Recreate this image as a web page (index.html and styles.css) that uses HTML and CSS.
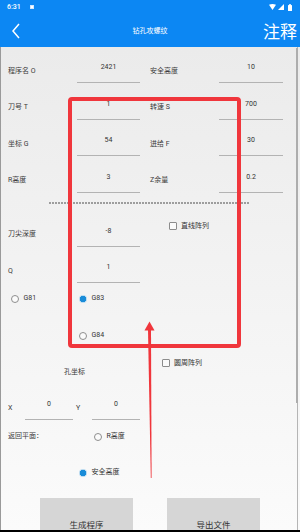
FILE: index.html
```html
<!DOCTYPE html>
<html lang="zh">
<head>
<meta charset="utf-8">
<title>钻孔攻螺纹</title>
<link rel="stylesheet" href="styles.css">
</head>
<body>
<header class="appbar">
  <div class="status">
    <span class="time">6:31</span>
    <span class="notif"></span>
    <span class="sys">
      <svg class="wifi" width="7" height="6" viewBox="0 0 7 6"><path d="M0 0.8 Q3.5 -0.8 7 0.8 L3.5 6 Z" fill="#fff"/></svg>
      <svg class="signal" width="6" height="6" viewBox="0 0 6 6"><path d="M6 0 L6 6 L0 6 Z" fill="#fff"/></svg>
      <svg class="battery" width="4" height="7" viewBox="0 0 4 7"><rect x="1.2" y="0" width="1.6" height="1" fill="#fff"/><rect x="0" y="1" width="4" height="6" rx="0.5" fill="#fff"/></svg>
    </span>
  </div>
  <div class="toolbar">
    <svg class="back" width="10" height="16" viewBox="0 0 10 16"><polyline points="8,1 2,8 8,15" fill="none" stroke="#fff" stroke-width="1.5"/></svg>
    <span class="title">钻孔攻螺纹</span>
    <span class="note">注释</span>
  </div>
</header>
<main class="content">
  <div class="form">
    <div class="row">
      <span class="lbl">程序名 O</span><span class="field">2421</span>
      <span class="lbl r">安全高度</span><span class="field w64">10</span>
    </div>
    <div class="row">
      <span class="lbl">刀号 T</span><span class="field">1</span>
      <span class="lbl r">转速 S</span><span class="field w64">700</span>
    </div>
    <div class="row">
      <span class="lbl">坐标 G</span><span class="field">54</span>
      <span class="lbl r">进给 F</span><span class="field w64">30</span>
    </div>
    <div class="row">
      <span class="lbl">R高度</span><span class="field">3</span>
      <span class="lbl r">Z余量</span><span class="field w64">0.2</span>
    </div>
    <div class="dashed"></div>
    <div class="row row-depth">
      <span class="lbl">刀尖深度</span><span class="field">-8</span>
      <span class="check check-line"><span class="box"></span>直线阵列</span>
    </div>
    <div class="row">
      <span class="lbl">Q</span><span class="field">1</span>
    </div>
    <div class="radio-row">
      <span class="radio first"><span class="dot"></span>G81</span>
      <span class="radio"><span class="dot on"></span>G83</span>
    </div>
    <div class="radio-row g84">
      <span class="radio"><span class="dot"></span>G84</span>
    </div>
    <div class="coord-head">
      <span class="holes">孔坐标</span>
      <span class="check"><span class="box"></span>圆周阵列</span>
    </div>
    <div class="xy-row">
      <span class="xl">X</span><span class="field w48">0</span>
      <span class="yl">Y</span><span class="field w48">0</span>
    </div>
    <div class="return-row">
      <span class="ret-lbl">返回平面：</span>
      <span class="radio"><span class="dot"></span>R高度</span>
    </div>
    <div class="safe-row">
      <span class="radio"><span class="dot on"></span>安全高度</span>
    </div>
    <div class="buttons">
      <span class="btn">生成程序</span>
      <span class="btn second">导出文件</span>
    </div>
  </div>
  <div class="scroll-track"></div>
  <div class="scroll-thumb"></div>
  <div class="highlight"></div>
  <svg class="arrow" width="20" height="162" viewBox="0 0 20 162">
    <polygon points="9.5,1.5 14.5,10.5 4.5,10.5" fill="#f0363c"/>
    <polygon points="8,10 11,10 11.6,158 10.8,158" fill="#f0363c"/>
  </svg>
</main>
<div class="navbar"></div>
</body>
</html>
```
FILE: styles.css
```css
* { box-sizing: border-box; }
html, body { margin: 0; padding: 0; }
body {
  width: 300px;
  height: 532px;
  overflow: hidden;
  display: flex;
  flex-direction: column;
  font-family: Roboto, "Noto Sans CJK SC", sans-serif;
  font-size: 7px;
  color: #3a3a3a;
  background: #fafafa;
}
.appbar {
  height: 47px;
  flex: none;
  background: #0c87f3;
  color: #fff;
}
.status {
  height: 14px;
  display: flex;
  align-items: center;
  padding: 0 8px 0 7px;
}
.time {
  font-size: 7px;
  font-weight: 500;
  line-height: 8px;
}
.notif {
  width: 4px;
  height: 4px;
  margin-left: 9px;
  background: #fff;
  border-radius: 1px;
  box-shadow: inset 0 0 0 1px #cfe6ff;
}
.sys {
  margin-left: auto;
  display: flex;
  align-items: center;
  gap: 2px;
}
.sys svg { display: block; }
.battery { margin-left: 2px; }
.toolbar {
  height: 33px;
  display: grid;
  grid-template-columns: 1fr auto 1fr;
  align-items: center;
}
.back {
  display: block;
  margin-left: 11px;
  margin-top: 1px;
}
.title {
  font-size: 7px;
  line-height: 10px;
}
.note {
  justify-self: end;
  font-family: "Noto Sans CJK SC", sans-serif;
  font-size: 17px;
  line-height: 20px;
  margin-right: 3px;
  margin-top: 1px;
}
.content {
  position: relative;
  flex: 1;
  overflow: hidden;
  background: linear-gradient(#ebebeb, #fbfbfb);
  border-left: 1px solid #9a9a9a;
}
.form {
  padding: 5.75px 0 0 7px;
}
.row {
  display: flex;
  align-items: center;
  height: 36.5px;
}
.lbl {
  width: 69px;
  line-height: 9px;
  flex: none;
}
.lbl.r { margin-left: 10px; }
.field {
  flex: none;
  width: 63px;
  height: 24px;
  padding-top: 3px;
  line-height: 10px;
  text-align: center;
  color: #333;
  border-bottom: 1px solid #b3b3b3;
}
.field.w64 { width: 64px; }
.field.w48 { width: 48px; }
.dashed {
  margin: 3.25px 0 0 41px;
  width: 201px;
  height: 2px;
  background: repeating-linear-gradient(to right, #9d9d9d 0 2px, transparent 2px 3px);
}
.row-depth { margin-top: 12.5px; }
.check {
  display: inline-flex;
  align-items: center;
  gap: 4px;
  line-height: 9px;
  color: #333;
}
.check-line {
  align-self: flex-start;
  margin-top: 5.25px;
  margin-left: 29px;
}
.box {
  width: 8px;
  height: 8px;
  border: 1px solid #8c8c8c;
  border-radius: 1px;
  background: #fafafa;
}
.radio-row {
  display: flex;
  align-items: center;
  height: 18px;
}
.radio {
  display: inline-flex;
  align-items: center;
  gap: 4.5px;
  line-height: 9px;
  color: #333;
}
.radio.first {
  margin-left: 3px;
  width: 68px;
}
.dot {
  width: 8px;
  height: 8px;
  border-radius: 50%;
  border: 1px solid #8e8e8e;
  background: #fbfbfb;
}
.dot.on {
  border: none;
  background: radial-gradient(circle, #1a8cd8 0 3px, #b9daf0 3.5px 4px);
}
.g84 {
  margin-top: 19px;
  padding-left: 71px;
}
.coord-head {
  display: flex;
  align-items: flex-start;
  height: 35px;
}
.holes {
  margin-left: 56px;
  margin-top: 23px;
  width: 98px;
  line-height: 8px;
  color: #333;
}
.coord-head .check { margin-top: 14px; }
.xy-row {
  display: flex;
  align-items: center;
  height: 24px;
  margin-top: 16px;
}
.xl { width: 17px; }
.yl { width: 16px; margin-left: 3px; }
.xl, .yl { line-height: 9px; padding-top: 2px; }
.return-row {
  display: flex;
  align-items: center;
  height: 16px;
  margin-top: 9px;
}
.ret-lbl { width: 86px; line-height: 9px; }
.safe-row {
  display: flex;
  align-items: center;
  height: 16px;
  margin-top: 20px;
  padding-left: 71px;
}
.buttons {
  display: flex;
  margin-top: 17px;
}
.btn {
  width: 93px;
  height: 58px;
  margin-left: 32px;
  background: #d6d6d6;
  font-family: "Noto Sans CJK SC", sans-serif;
  font-size: 8.5px;
  line-height: 53px;
  text-align: center;
  color: #333;
}
.btn.second { margin-left: 34px; }
.scroll-track {
  position: absolute;
  left: 296px;
  top: 0;
  bottom: 0;
  width: 1px;
  background: #b5b5b5;
}
.scroll-thumb {
  position: absolute;
  left: 295px;
  top: 1px;
  width: 2px;
  height: 355px;
  background: #adadad;
}
.highlight {
  position: absolute;
  left: 67px;
  top: 50px;
  width: 173px;
  height: 251px;
  border: 4px solid #f0363c;
  border-radius: 4px;
}
.arrow {
  position: absolute;
  left: 139px;
  top: 273px;
  display: block;
}
.navbar {
  height: 2px;
  flex: none;
  background: #000;
}
```
